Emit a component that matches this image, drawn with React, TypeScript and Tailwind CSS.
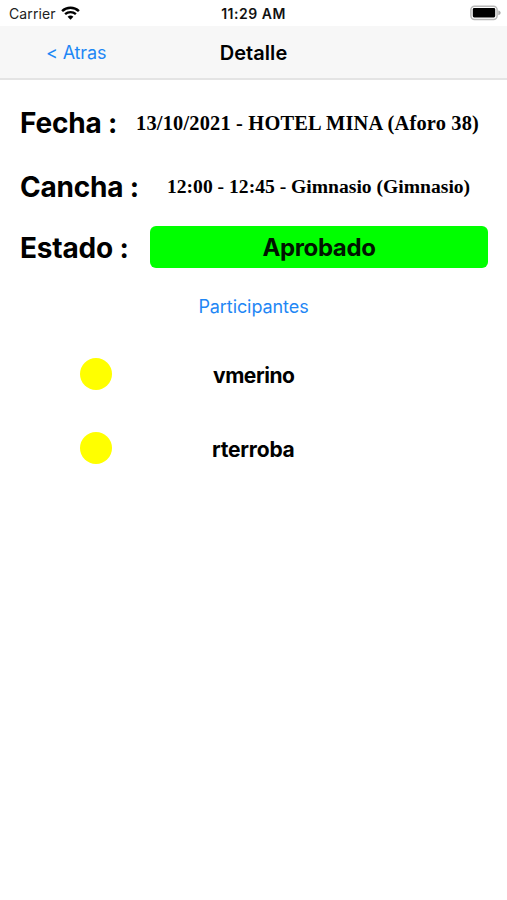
import React from "react";

function WifiIcon() {
  return (
    <svg viewBox="0 0 19 14" className="h-[14px] w-[19px]" fill="none" stroke="#000">
      <path d="M1.1 5.2C5.8.7 13.2.7 17.9 5.2" strokeWidth="2.5" />
      <path d="M4.1 8.2C7.1 5.3 11.9 5.3 14.9 8.2" strokeWidth="2.3" />
      <path d="M6.6 10.7C8.3 9.1 10.7 9.1 12.4 10.7L9.5 13.7Z" fill="#000" stroke="none" />
    </svg>
  );
}

function BatteryIcon() {
  return (
    <svg viewBox="0 0 31 16" className="h-[16px] w-[31px]">
      <rect x="0.9" y="1.2" width="26.2" height="13.2" rx="3.6" fill="#fff" stroke="#b8b8b8" strokeWidth="1.5" />
      <rect x="2.8" y="3.1" width="22.4" height="9.4" rx="1.4" fill="#000" />
      <path d="M28.3 5.4C31.4 6 31.4 9.6 28.3 10.2Z" fill="#a8a8a8" />
    </svg>
  );
}

function Field({ label, labelClass, children }: { label: string; labelClass: string; children: React.ReactNode }) {
  return (
    <div className="flex h-[42px] items-center pl-5">
      <div className={`shrink-0 text-[28px] font-bold leading-[34px] tracking-[-0.2px] ${labelClass}`}>{label}</div>
      {children}
    </div>
  );
}

function Participant({ name, nameClass }: { name: string; nameClass: string }) {
  return (
    <div className="grid h-[32px] grid-cols-[80px_32px_1fr] items-center">
      <span className="col-start-2 size-8 rounded-full bg-[#ffff00]" />
      <span className={`whitespace-nowrap text-[21px] font-bold leading-7 ${nameClass}`}>{name}</span>
    </div>
  );
}

export default function App() {
  return (
    <div className="h-[900px] w-[507px] overflow-hidden whitespace-nowrap bg-white font-['Inter',sans-serif] text-black">
      <div className="grid h-[26px] grid-cols-3 items-center">
        <div className="flex items-center gap-[5px] pl-[9px]">
          <span className="pt-px text-[14px] leading-5 tracking-[0.1px] text-[#222]">Carrier</span>
          <WifiIcon />
        </div>
        <div className="pt-px text-center text-[14px] font-semibold leading-5 tracking-[0.5px] text-[#111]">11:29 AM</div>
        <div className="flex justify-end pr-[6px]">
          <BatteryIcon />
        </div>
      </div>
      <div className="grid h-[54px] grid-cols-3 items-center border-b-2 border-[#e4e4e4] bg-[#f7f7f7]">
        <div className="pl-[46px] pt-[2px] text-[18px] leading-6 tracking-[-0.15px] text-[#1f87f5]">&lt; Atras</div>
        <div className="pt-px text-center text-[20px] font-semibold leading-6 tracking-[0.05px]">Detalle</div>
      </div>

      <div className="pt-[22px]">
        <Field label="Fecha :" labelClass="w-[116px]">
          <span className="pb-px font-['Liberation_Serif',serif] text-[20.4px] font-bold leading-6 tracking-[0.19px]">
            13/10/2021 - HOTEL MINA (Aforo 38)
          </span>
        </Field>
      </div>
      <div className="pt-[22px]">
        <Field label="Cancha :" labelClass="w-[147px]">
          <span className="pb-px font-['Liberation_Serif',serif] text-[19.6px] font-bold leading-6">
            12:00 - 12:45 - Gimnasio (Gimnasio)
          </span>
        </Field>
      </div>
      <div className="pt-[18px]">
        <Field label="Estado :" labelClass="w-[130px] pt-[2px]">
          <div className="h-[42px] w-[338px] rounded-[6px] bg-[#00ff00] pt-px text-center text-[24px] font-bold leading-[42px] tracking-[-0.4px] text-[#001400]">
            Aprobado
          </div>
        </Field>
      </div>

      <div className="pt-[27px] text-center text-[18px] leading-6 tracking-[-0.08px] text-[#1f87f5]">Participantes</div>

      <div className="flex flex-col gap-[42px] pt-[39px]">
        <Participant name="vmerino" nameClass="pl-[101px] pt-[3px] tracking-[-0.45px]" />
        <Participant name="rterroba" nameClass="pl-[100px] pt-1 tracking-[-0.2px]" />
      </div>
    </div>
  );
}
